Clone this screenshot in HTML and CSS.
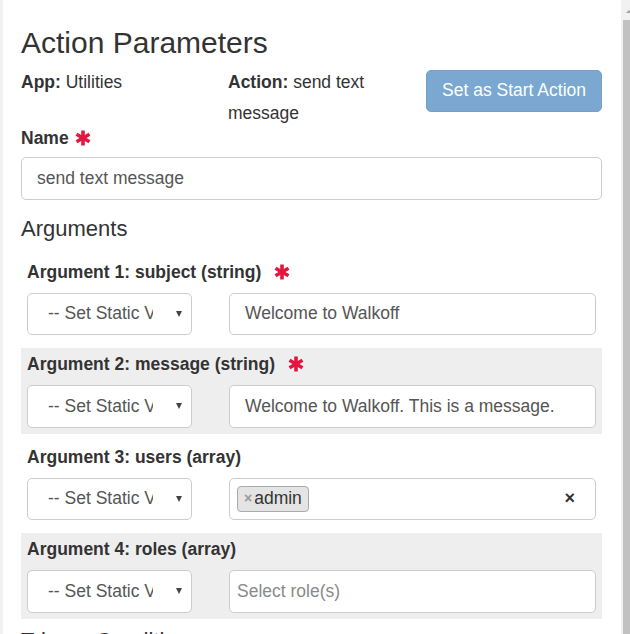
FILE: index.html
```html
<!DOCTYPE html>
<html>
<head>
<meta charset="utf-8">
<link rel="stylesheet" href="styles.css">
</head>
<body>
<div class="window">
  <main class="panel">
    <h1 class="title">Action Parameters</h1>
    <div class="meta">
      <div class="meta-col"><b>App:</b> Utilities</div>
      <div class="meta-col"><b>Action:</b> send text message</div>
      <div class="meta-btn"><button class="btn" disabled>Set as Start Action</button></div>
    </div>
    <div class="field-label">Name <svg class="req req-name" viewBox="0 0 16 16"><g stroke="currentColor" stroke-width="3.6"><line x1="8" y1="0.5" x2="8" y2="15.5"/><line x1="1.5" y1="4.25" x2="14.5" y2="11.75"/><line x1="1.5" y1="11.75" x2="14.5" y2="4.25"/></g></svg></div>
    <div class="input">send text message</div>
    <h2 class="section">Arguments</h2>
    <div class="args">
      <div class="arg">
        <div class="arg-label">Argument 1: subject (string) <svg class="req req-arg" viewBox="0 0 16 16"><g stroke="currentColor" stroke-width="3.6"><line x1="8" y1="0.5" x2="8" y2="15.5"/><line x1="1.5" y1="4.25" x2="14.5" y2="11.75"/><line x1="1.5" y1="11.75" x2="14.5" y2="4.25"/></g></svg></div>
        <div class="arg-row">
          <div class="select"><span class="select-text">-- Set Static Value</span><span class="caret"></span></div>
          <div class="input field">Welcome to Walkoff</div>
        </div>
      </div>
      <div class="arg alt">
        <div class="arg-label">Argument 2: message (string) <svg class="req req-arg" viewBox="0 0 16 16"><g stroke="currentColor" stroke-width="3.6"><line x1="8" y1="0.5" x2="8" y2="15.5"/><line x1="1.5" y1="4.25" x2="14.5" y2="11.75"/><line x1="1.5" y1="11.75" x2="14.5" y2="4.25"/></g></svg></div>
        <div class="arg-row">
          <div class="select"><span class="select-text">-- Set Static Value</span><span class="caret"></span></div>
          <div class="input field">Welcome to Walkoff. This is a message.</div>
        </div>
      </div>
      <div class="arg">
        <div class="arg-label">Argument 3: users (array)</div>
        <div class="arg-row">
          <div class="select"><span class="select-text">-- Set Static Value</span><span class="caret"></span></div>
          <div class="input field tags"><span class="tag"><span class="tag-x">×</span>admin</span><span class="clear">×</span></div>
        </div>
      </div>
      <div class="arg alt">
        <div class="arg-label">Argument 4: roles (array)</div>
        <div class="arg-row">
          <div class="select"><span class="select-text">-- Set Static Value</span><span class="caret"></span></div>
          <div class="input field tags"><span class="placeholder">Select role(s)</span></div>
        </div>
      </div>
    </div>
    <h2 class="section trigger">Trigger Conditions</h2>
  </main>
  <div class="scrollbar"><span class="arrow"></span><span class="thumb"></span></div>
</div>
</body>
</html>
```
FILE: styles.css
```css
html, body {
  margin: 0;
  padding: 0;
  background: #fff;
  overflow: hidden;
}
body {
  font-family: "Liberation Sans", Arial, sans-serif;
  font-size: 17.5px;
  line-height: 25px;
  color: #333;
}
.window {
  display: flex;
  height: 634px;
  overflow: hidden;
}
.panel {
  flex: 1;
  min-width: 0;
  border-left: 3px solid #f1f1f1;
  padding: 0 19px 0 18px;
}
.title {
  font-size: 30px;
  font-weight: normal;
  line-height: 33px;
  margin: 26px 0 0;
}
.meta {
  display: grid;
  grid-template-columns: 207px 190px 1fr;
  margin-top: 8px;
  line-height: 31px;
}
.meta-btn {
  justify-self: end;
  align-self: start;
  padding-top: 3px;
}
.btn {
  font-family: inherit;
  font-size: 17.5px;
  line-height: 25px;
  color: #fff;
  background: #7aa8d0;
  border: 1px solid #77a0c4;
  border-radius: 5px;
  padding: 7px 15px 7.5px;
  display: block;
}
.field-label {
  display: flex;
  align-items: center;
  font-weight: bold;
  line-height: 20px;
  margin-top: -1px;
}
.req {
  width: 16px;
  height: 16px;
  color: #e3163f;
  flex: none;
}
.req-name { margin-left: 6px; }
.req-arg { margin-left: 13px; }
.input {
  margin-top: 9px;
  height: 42.5px;
  box-sizing: border-box;
  border: 1px solid #ccc;
  border-radius: 5px;
  padding: 0 15px;
  display: flex;
  align-items: center;
  color: #555;
  background: #fff;
  white-space: nowrap;
}
.section {
  font-size: 22px;
  font-weight: normal;
  line-height: 26px;
  margin: 16.5px 0 0;
}
.args {
  margin-top: 13px;
  display: flex;
  flex-direction: column;
  gap: 6.5px;
}
.arg {
  padding: 5.5px 6px 6px;
}
.arg.alt {
  background: #eee;
}
.arg-label {
  display: flex;
  align-items: center;
  font-weight: bold;
  line-height: 22px;
  margin-bottom: 10px;
}
.arg-row {
  display: grid;
  grid-template-columns: 165px 1fr;
  column-gap: 37px;
}
.select {
  height: 42.5px;
  box-sizing: border-box;
  border: 1px solid #ccc;
  border-radius: 5px;
  background: #fff;
  display: flex;
  align-items: center;
  padding: 0 9px 0 20px;
  color: #555;
}
.select-text {
  width: 105px;
  overflow: hidden;
  white-space: nowrap;
}
.caret {
  margin-left: auto;
  width: 0;
  height: 0;
  border-left: 3.5px solid transparent;
  border-right: 3.5px solid transparent;
  border-top: 6px solid #444;
}
.field {
  margin-top: 0;
}
.tags {
  padding: 0 20px 0 7px;
}
.tag {
  display: inline-flex;
  align-items: center;
  height: 26px;
  box-sizing: border-box;
  border: 1px solid #aaa;
  border-radius: 4px;
  background: #e4e4e4;
  padding: 0 6px 0 6px;
  color: #333;
}
.tag-x {
  color: #999;
  font-weight: bold;
  font-size: 14px;
  margin-right: 2px;
}
.clear {
  margin-left: auto;
  font-weight: bold;
  font-size: 18px;
  color: #333;
}
.placeholder {
  color: #8a8a8a;
}
.trigger {
  margin-top: 9px;
}
.scrollbar {
  width: 9px;
  flex: none;
  background: #f1f1f1;
  display: flex;
  flex-direction: column;
}
.arrow {
  margin: 10px 0 0 5px;
  width: 0;
  height: 0;
  border-left: 3px solid transparent;
  border-right: 3px solid transparent;
  border-bottom: 3px solid #a3a3a3;
}
.thumb {
  flex: 1;
  margin: 7px 0 0 2px;
  background: #c1c1c1;
}
```
